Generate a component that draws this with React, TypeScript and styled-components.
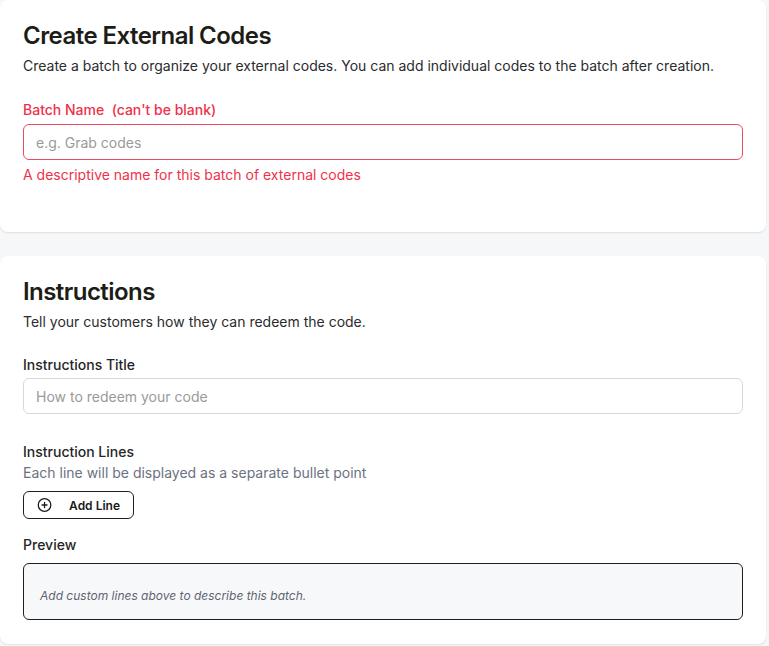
import React from 'react';
import styled, { createGlobalStyle } from 'styled-components';

const GlobalStyle = createGlobalStyle`
  body {
    margin: 0;
    background: #f6f7f9;
    font-family: Inter, "Noto Sans", sans-serif;
    color: #222;
  }
`;

const Page = styled.div`
  width: 766px;
  display: flex;
  flex-direction: column;
  gap: 24px;
  padding-bottom: 1px;
`;

const Card = styled.section<{ top?: number; bottom?: number }>`
  background: #ffffff;
  border-radius: 8px;
  box-shadow: 0 1px 2px rgba(0, 0, 0, 0.1);
  padding: ${p => p.top ?? 20}px 23px ${p => p.bottom ?? 24}px;
  display: flex;
  flex-direction: column;
`;

const Title = styled.h2`
  margin: 0 0 4px;
  font-size: 24px;
  line-height: 32px;
  font-weight: 600;
  color: #1d1d18;
  letter-spacing: -0.55px;
`;

const Subtitle = styled.p<{ spacing?: number }>`
  margin: 0 0 ${p => p.spacing ?? 24}px;
  font-size: 14px;
  line-height: 20px;
  color: #2b2b2b;
`;

const Field = styled.div<{ gapAfter?: number }>`
  display: flex;
  flex-direction: column;
  margin-bottom: ${p => p.gapAfter ?? 0}px;
`;

const Label = styled.label<{ error?: boolean; spacing?: number }>`
  font-size: 14px;
  line-height: 20px;
  font-weight: 500;
  color: ${p => (p.error ? '#f0314a' : '#262626')};
  margin-bottom: ${p => p.spacing ?? 4}px;
  white-space: pre;
`;

const Input = styled.input<{ error?: boolean }>`
  box-sizing: border-box;
  height: 36px;
  width: 100%;
  border: 1px solid ${p => (p.error ? '#ee4a5e' : '#d6d8dc')};
  border-radius: 6px;
  padding: 0 12px;
  font-family: inherit;
  font-size: 14px;
  color: #222;
  outline: none;
  &::placeholder {
    color: #9a9a9a;
  }
`;

const Help = styled.div<{ error?: boolean }>`
  font-size: 14px;
  line-height: 20px;
  margin-top: 5px;
  color: ${p => (p.error ? '#f0314a' : '#6b7280')};
`;

const Hint = styled.div`
  font-size: 14px;
  line-height: 20px;
  color: #6b7280;
  margin-top: -3px;
  margin-bottom: 8px;
`;

const OutlineButton = styled.button`
  align-self: flex-start;
  box-sizing: border-box;
  height: 28px;
  width: 111px;
  display: flex;
  align-items: center;
  gap: 17px;
  padding: 0 13px;
  background: #fff;
  border: 1px solid #1f1f1f;
  border-radius: 6px;
  font-family: inherit;
  font-size: 12px;
  font-weight: 600;
  color: #1a1a1a;
  white-space: nowrap;
  cursor: pointer;
`;

const PreviewBox = styled.div`
  box-sizing: border-box;
  height: 57px;
  border: 1px solid #1f1f1f;
  border-radius: 6px;
  background: #f7f8fa;
  padding: 24px 16px 0;
  font-size: 12px;
  line-height: 16px;
  font-style: italic;
  color: #5f6470;
`;

const PlusCircle = () => (
  <svg width="16" height="16" viewBox="0 0 24 24" fill="none" stroke="#1a1a1a" strokeWidth="2" strokeLinecap="round">
    <circle cx="12" cy="12" r="10" />
    <path d="M8 12h8M12 8v8" />
  </svg>
);

export default function App() {
  return (
    <>
      <GlobalStyle />
      <Page>
        <Card top={20} bottom={47}>
          <Title>Create External Codes</Title>
          <Subtitle>
            Create a batch to organize your external codes. You can add individual codes to the batch after creation.
          </Subtitle>
          <Field>
            <Label error>{"Batch Name  (can't be blank)"}</Label>
            <Input error placeholder="e.g. Grab codes" />
            <Help error>A descriptive name for this batch of external codes</Help>
          </Field>
        </Card>
        <Card top={20} bottom={24}>
          <Title>Instructions</Title>
          <Subtitle spacing={23}>Tell your customers how they can redeem the code.</Subtitle>
          <Field gapAfter={28}>
            <Label spacing={3}>Instructions Title</Label>
            <Input placeholder="How to redeem your code" />
          </Field>
          <Field gapAfter={16}>
            <Label>Instruction Lines</Label>
            <Hint>Each line will be displayed as a separate bullet point</Hint>
            <OutlineButton>
              <PlusCircle />
              Add Line
            </OutlineButton>
          </Field>
          <Field>
            <Label spacing={8}>Preview</Label>
            <PreviewBox>Add custom lines above to describe this batch.</PreviewBox>
          </Field>
        </Card>
      </Page>
    </>
  );
}
